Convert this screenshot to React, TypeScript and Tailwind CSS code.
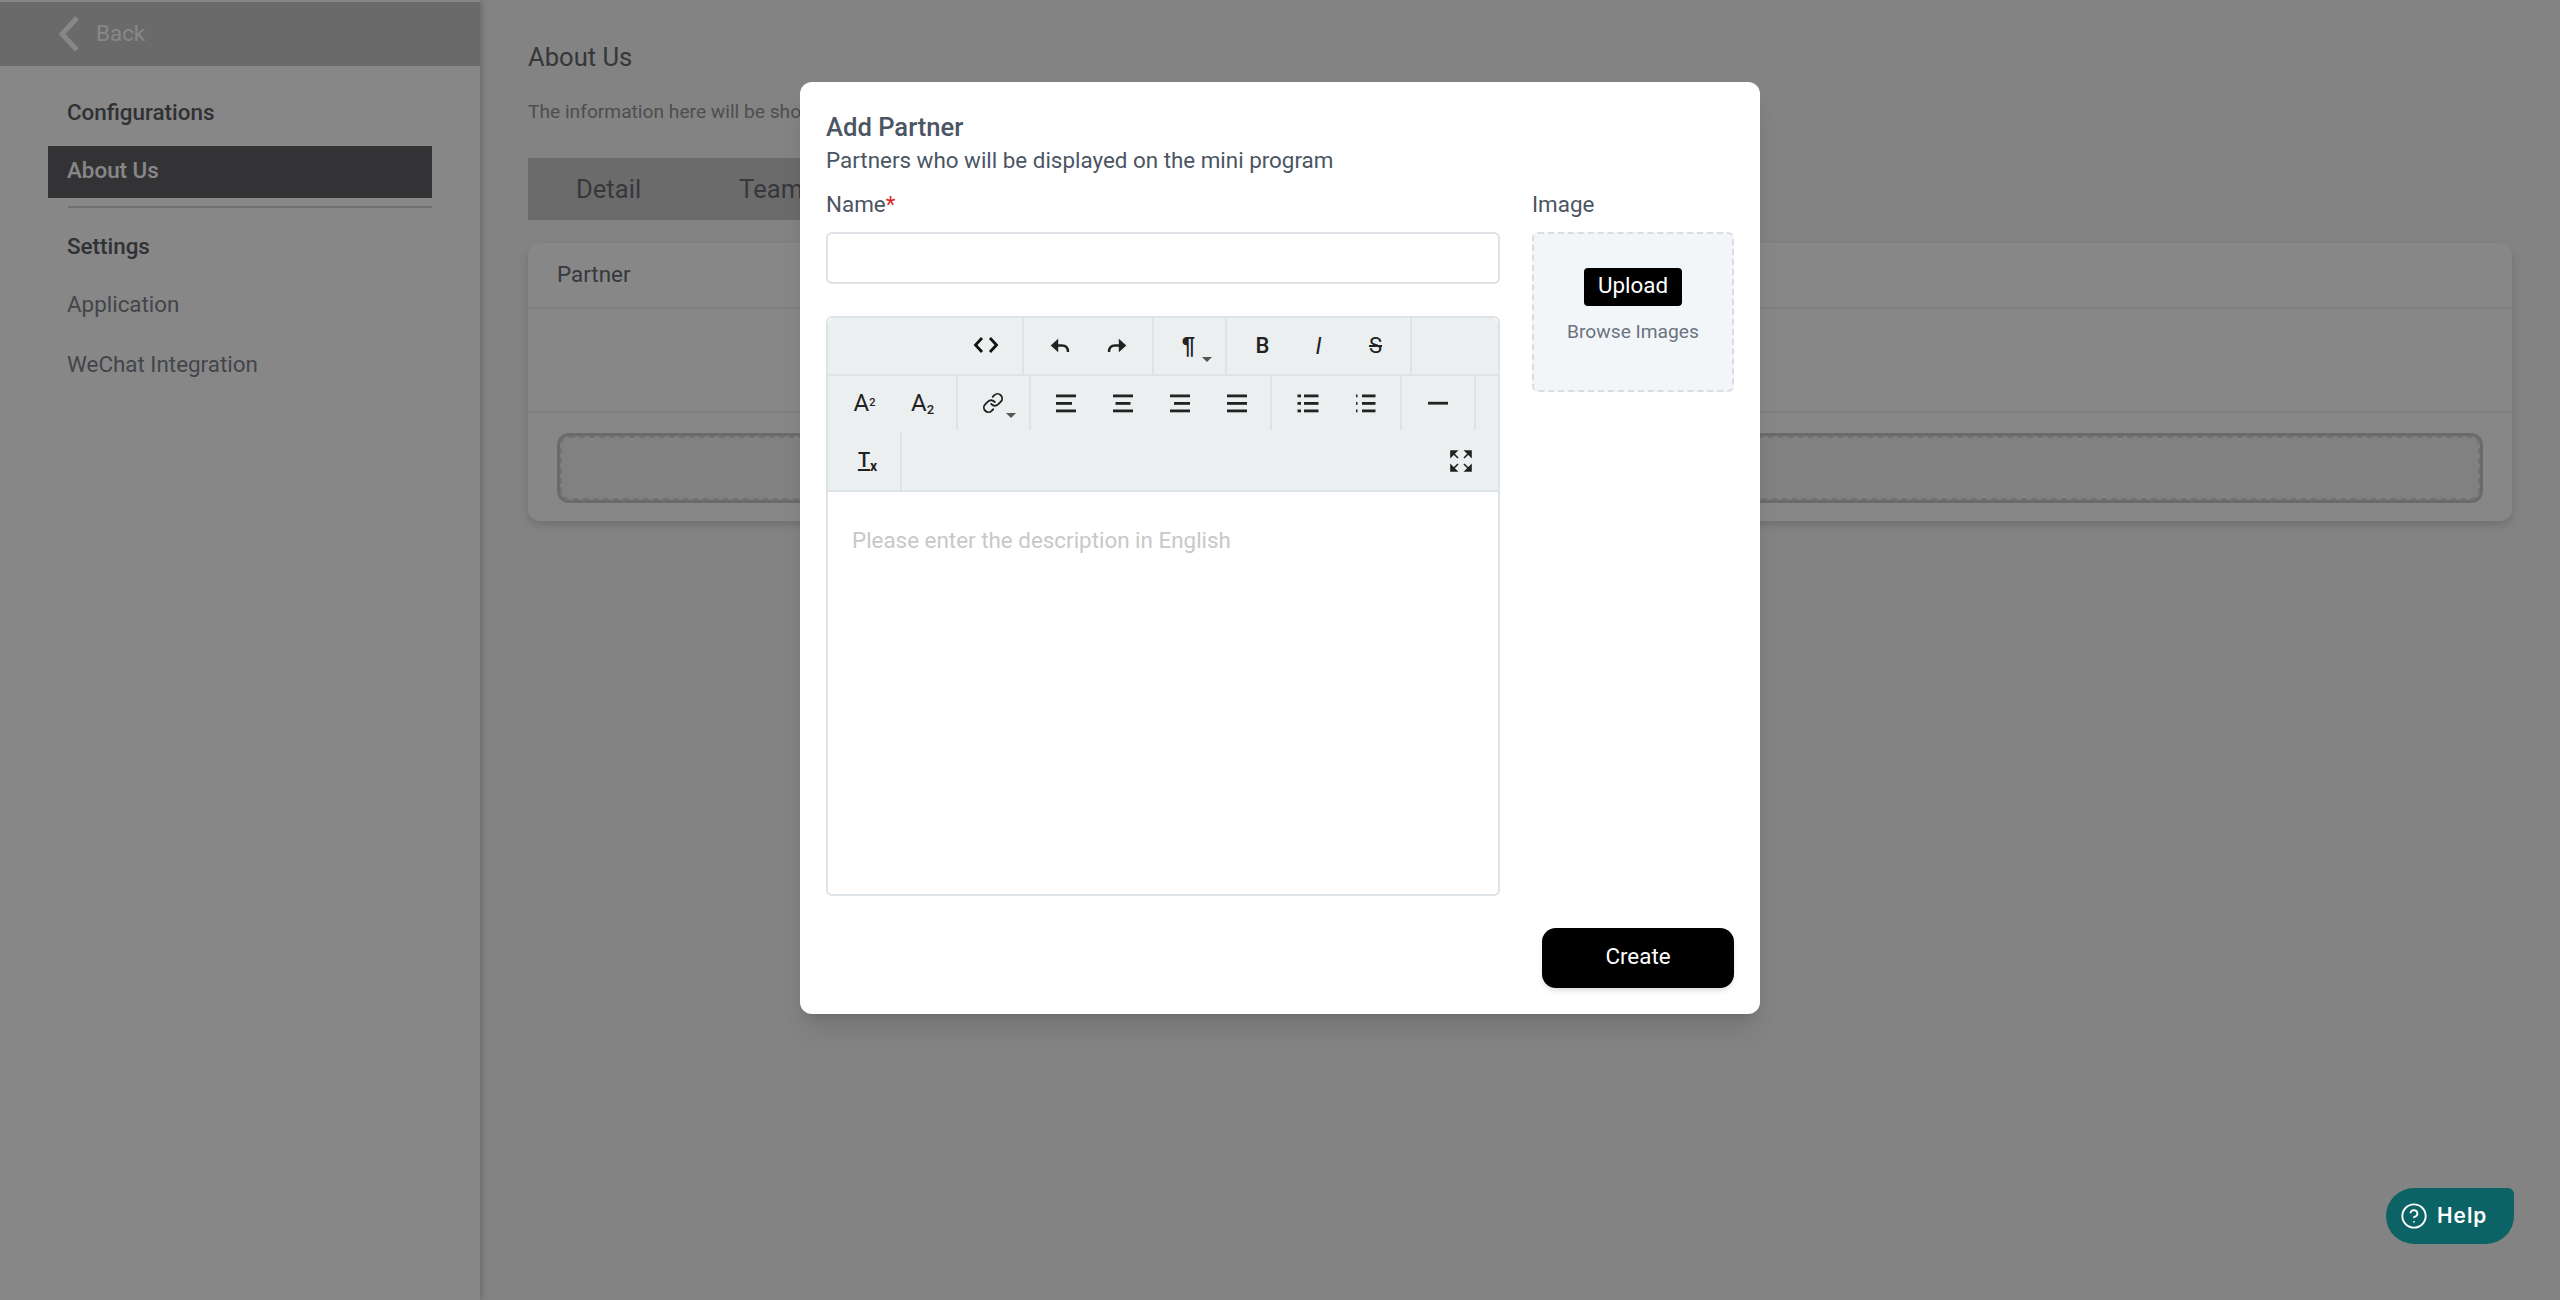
import type { ReactNode } from "react";
import { CircleHelp, Link } from "lucide-react";

function Caret() {
  return <span className="absolute bottom-[12px] right-[13px] h-0 w-0 border-x-[5px] border-t-[5px] border-x-transparent border-t-[#555]" />;
}

function ToolBtn({ x, children }: { x?: boolean; children: ReactNode }) {
  return (
    <div className={`relative flex h-full items-center justify-center text-[#222] ${x ? "w-[71px]" : "w-[57px]"}`}>
      {children}
    </div>
  );
}

function Group({ w, end, children }: { w: string; end?: boolean; children?: ReactNode }) {
  return (
    <div className={`flex h-full shrink-0 border-r-2 border-[#dde3e6] ${w} ${end ? "justify-end pr-[9px]" : "justify-center"}`}>
      {children}
    </div>
  );
}

function Bars({ rows }: { rows: [number, number][] }) {
  return (
    <svg width="24" height="24" viewBox="0 0 24 24" fill="#222" className="translate-x-[1px]">
      {rows.map(([left, width], i) => (
        <rect key={i} x={left} y={3.5 + i * 7.5} width={width} height="2.8" />
      ))}
    </svg>
  );
}

function ListIcon({ dot, gap }: { dot: number; gap: number }) {
  return (
    <svg width="24" height="24" viewBox="0 0 24 24" fill="#222">
      {[0, 1, 2].map((i) => (
        <g key={i}>
          <rect x={gap === 9 ? 3 : 1.5} y={3.5 + i * 7.5} width={dot} height="2.8" />
          <rect x={gap} y={3.5 + i * 7.5} width={22.5 - gap} height="2.8" />
        </g>
      ))}
    </svg>
  );
}

function Undo({ flip }: { flip?: boolean }) {
  return (
    <svg width="24" height="24" viewBox="0 0 24 24" fill="none" stroke="#222" strokeWidth="2.4" className={flip ? "-scale-x-100" : ""}>
      <path d="M9 7.500 L4.500 11.500 L9 15.500 Z" fill="#222" />
      <path d="M6 11.500 H14 C18 11.500 20 14 20 18" />
    </svg>
  );
}

function Toolbar() {
  return (
    <div className="rounded-t-md bg-[#ebeff0]">
      <div className="flex h-[58px] border-b-2 border-[#dde3e6]">
        <Group w="w-[196px]" end>
          <ToolBtn>
            <svg width="26" height="16" viewBox="0 0 26 16" fill="none" stroke="#111" strokeWidth="2.8" className="translate-x-[1px] -translate-y-[1px]">
              <path d="M9 1 L2.500 8 L9 15 M17 1 L23.500 8 L17 15" />
            </svg>
          </ToolBtn>
        </Group>
        <Group w="w-[130px]">
          <ToolBtn><Undo /></ToolBtn>
          <ToolBtn><Undo flip /></ToolBtn>
        </Group>
        <Group w="w-[73px]">
          <ToolBtn x>
            <span className="-translate-x-[1px] font-['Liberation_Sans',sans-serif] text-[24px] font-bold leading-none">¶</span>
            <Caret />
          </ToolBtn>
        </Group>
        <Group w="w-[185px]">
          <ToolBtn><span className="translate-x-[1px] text-[22px] font-medium leading-none">B</span></ToolBtn>
          <ToolBtn><span className="text-[23px] italic leading-none">I</span></ToolBtn>
          <ToolBtn><span className="text-[22px] leading-none line-through">S</span></ToolBtn>
        </Group>
      </div>
      <div className="flex h-[54px]">
        <Group w="w-[130px]">
          <ToolBtn><span className="translate-x-[1px] text-[24px] leading-none">A<sup className="text-[11px] font-medium">2</sup></span></ToolBtn>
          <ToolBtn><span className="translate-x-[2px] text-[24px] leading-none">A<sub className="text-[13px] font-medium">2</sub></span></ToolBtn>
        </Group>
        <Group w="w-[73px]">
          <ToolBtn x>
            <Link size={22} strokeWidth={2} className="-translate-x-[1px]" />
            <Caret />
          </ToolBtn>
        </Group>
        <Group w="w-[241px]">
          <ToolBtn><Bars rows={[[2, 20], [2, 16], [2, 20]]} /></ToolBtn>
          <ToolBtn><Bars rows={[[2, 20], [4.5, 15], [2, 20]]} /></ToolBtn>
          <ToolBtn><Bars rows={[[2, 20], [6, 16], [2, 20]]} /></ToolBtn>
          <ToolBtn><Bars rows={[[2, 20], [2, 20], [2, 20]]} /></ToolBtn>
        </Group>
        <Group w="w-[130px]">
          <ToolBtn><ListIcon dot={3.5} gap={8} /></ToolBtn>
          <ToolBtn><ListIcon dot={1.5} gap={9} /></ToolBtn>
        </Group>
        <Group w="w-[74px]">
          <ToolBtn>
            <svg width="24" height="24" viewBox="0 0 24 24" fill="#222"><rect x="2" y="10.800" width="20" height="2.800" /></svg>
          </ToolBtn>
        </Group>
      </div>
      <div className="flex h-[62px] border-b-2 border-[#dde3e6] pt-[2px]">
        <Group w="w-[74px]">
          <ToolBtn>
            <span className="relative -translate-y-[1px] text-[20px] font-medium leading-none underline underline-offset-2">T<span className="absolute left-[12px] top-[9px] text-[14px] font-bold no-underline">x</span></span>
          </ToolBtn>
        </Group>
        <div className="ml-auto flex w-[74px] items-center justify-center">
          <svg width="22" height="22" viewBox="0 0 22 22" fill="#222" stroke="#222" strokeWidth="1.6">
            <path d="M1 1 H6.500 L1 6.500 Z M3 3 L8 8" />
            <path d="M21 1 H15.500 L21 6.500 Z M19 3 L14 8" />
            <path d="M1 21 H6.500 L1 15.500 Z M3 19 L8 14" />
            <path d="M21 21 H15.500 L21 15.500 Z M19 19 L14 14" />
          </svg>
        </div>
      </div>
    </div>
  );
}

function Sidebar() {
  return (
    <aside className="h-[1300px] w-[480px] shrink-0 bg-white pt-[2px] shadow-[2px_0_6px_rgba(0,0,0,0.2)]">
      <div className="flex h-[64px] items-center gap-[16px] bg-[#c8c8c8] pl-[58px]">
        <svg width="22" height="36" viewBox="0 0 22 36" fill="none" stroke="#ffffff" strokeWidth="5">
          <path d="M19 2 L4 18 L19 34" />
        </svg>
        <span className="-translate-y-[1px] text-[22.4px] leading-none text-white">Back</span>
      </div>
      <div className="pl-[48px] pr-[48px] pt-[32px]">
        <p className="pl-[19px] text-[22.4px] font-medium leading-[28px] text-[#5c5e64]">Configurations</p>
        <div className="mt-[20px] h-[52px] bg-[#606064] pl-[19px] pt-[10px] text-[22.4px] font-medium leading-[28px] text-white">About Us</div>
        <div className="ml-[20px] mt-[8px] h-[2px] bg-[#d1d5db]" />
        <p className="mt-[24px] pl-[19px] text-[22.4px] font-medium leading-[28px] text-[#5c5e64]">Settings</p>
        <p className="mt-[30px] pl-[19px] text-[22.4px] leading-[28px] text-[#7f838d]">Application</p>
        <p className="mt-[32px] pl-[19px] text-[22.4px] leading-[28px] text-[#7f838d]">WeChat Integration</p>
      </div>
    </aside>
  );
}

function Content() {
  return (
    <main className="min-w-0 flex-1 pl-[48px] pr-[48px] pt-[42px]">
      <h1 className="text-[25.6px] leading-[30px] text-[#66686e]">About Us</h1>
      <p className="mt-[27px] text-[19.2px] leading-[26px] text-[#949496]">The information here will be shown on the mini program</p>
      <div className="mt-[33px] flex h-[62px] w-[520px] items-center gap-[98px] bg-[#cacaca] pl-[48px] text-[25.6px] text-[#686a72]">
        <span>Detail</span>
        <span>Team</span>
      </div>
      <section className="mt-[23px] rounded-[12px] bg-white shadow-[0_4px_8px_rgba(0,0,0,0.15)]">
        <div className="h-[66px] border-b-2 border-[#eeeeee] pl-[29px] pt-[16px] text-[22.4px] leading-[30px] text-[#686a72]">Partner</div>
        <div className="h-[104px] border-b-2 border-[#eeeeee]" />
        <div className="px-[29px] pb-[18px] pt-[20px]">
          <div className="h-[70px] rounded-[12px] border-[3px] border-[#c8c8c8] bg-[#f3f3f3]">
            <div className="h-full rounded-[9px] border-2 border-dashed border-[#d8d8d8]" />
          </div>
        </div>
      </section>
    </main>
  );
}

function Modal() {
  return (
    <div className="mx-auto h-[932px] w-[960px] rounded-[12px] bg-white px-[26px] pt-[30px] shadow-xl">
      <h2 className="text-[25.6px] font-medium leading-[30px] text-[#4b5563]">Add Partner</h2>
      <p className="mt-[4px] text-[22.4px] leading-[28px] text-[#4b5563]">Partners who will be displayed on the mini program</p>
      <div className="mt-[16px] flex justify-between">
        <div className="w-[674px]">
          <label className="block text-[22.4px] leading-[28px] text-[#4b5563]">
            Name<span className="text-[#dc2626]">*</span>
          </label>
          <div className="mt-[14px] h-[52px] rounded-[6px] border-2 border-[#dfe1e6]" />
          <div className="mt-[32px] h-[580px] rounded-[6px] border-2 border-[#dde3e6]">
            <Toolbar />
            <p className="px-[24px] pt-[34px] text-[22.4px] leading-[28px] text-[#c8c8c8]">Please enter the description in English</p>
          </div>
        </div>
        <div className="w-[202px]">
          <label className="block text-[22.4px] leading-[28px] text-[#4b5563]">Image</label>
          <div className="mt-[14px] flex h-[160px] flex-col items-center rounded-[6px] border-2 border-dashed border-[#d9dde3] bg-[#f3f6f9] pt-[34px]">
            <div className="rounded-[4px] bg-black px-[14px] pb-[7px] pt-[3px] text-[22.4px] leading-[28px] text-white">Upload</div>
            <p className="mt-[14px] text-[19.2px] leading-[24px] text-[#6b7280]">Browse Images</p>
          </div>
        </div>
      </div>
      <div className="mt-[32px] flex justify-end">
        <button className="h-[60px] w-[192px] rounded-[14px] bg-black pb-[2px] text-[22.4px] text-white shadow-md">Create</button>
      </div>
    </div>
  );
}

export default function App() {
  return (
    <div className="relative h-[1300px] overflow-hidden font-['Roboto',sans-serif]">
      <div className="flex bg-[#f7f7f7]">
        <Sidebar />
        <Content />
      </div>
      <div className="absolute inset-0 bg-black/[0.47] pt-[82px]">
        <Modal />
      </div>
      <button className="absolute right-[46px] top-[1188px] flex h-[56px] w-[128px] items-center gap-[9px] rounded-[28px] rounded-tr-[6px] bg-[#0b6366] pl-[14px] font-['Inter',sans-serif] text-[20.8px] font-semibold tracking-wider text-white">
        <CircleHelp size={28} strokeWidth={1.6} />
        Help
      </button>
    </div>
  );
}
